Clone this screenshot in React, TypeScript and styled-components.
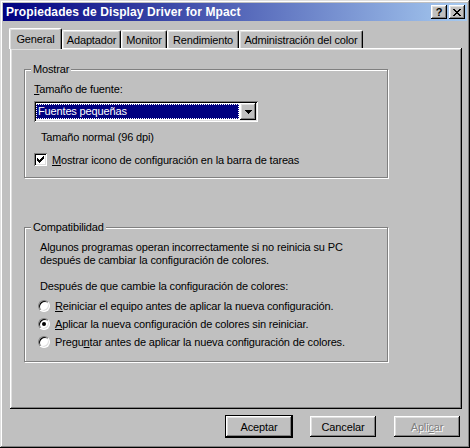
import React from 'react';
import styled, { createGlobalStyle, css } from 'styled-components';

const GlobalStyle = createGlobalStyle`
  html, body {
    margin: 0;
    padding: 0;
    background: #c0c0c0;
  }
  body {
    font-family: "Liberation Sans", Arial, sans-serif;
    font-size: 11px;
    letter-spacing: -0.15px;
    color: #000;
  }
`;

const raised = css`
  box-shadow: inset -1px -1px #000, inset 1px 1px #fff, inset -2px -2px #808080, inset 2px 2px #dfdfdf;
`;

const Window = styled.div`
  width: 470px;
  height: 448px;
  box-sizing: border-box;
  padding: 3px;
  background: #c0c0c0;
  display: flex;
  flex-direction: column;
  box-shadow: inset -1px -1px #000, inset 1px 1px #dfdfdf, inset -2px -2px #808080, inset 2px 2px #fff;
`;

const TitleBar = styled.div`
  height: 18px;
  display: flex;
  align-items: center;
  justify-content: space-between;
  padding: 0 2px 0 3px;
  background: linear-gradient(90deg, #000080 0%, #a6caf0 100%);
`;

const TitleText = styled.span`
  color: #fff;
  font-weight: bold;
  font-size: 12px;
  letter-spacing: 0.1px;
  white-space: nowrap;
`;

const TitleButtons = styled.div`
  display: flex;
  gap: 2px;
`;

const TitleButton = styled.div`
  width: 16px;
  height: 14px;
  box-sizing: border-box;
  background: #c0c0c0;
  display: flex;
  align-items: center;
  justify-content: center;
  font-weight: bold;
  font-size: 11px;
  line-height: 1;
  ${raised}
`;

const Body = styled.div`
  flex: 1;
  display: flex;
  flex-direction: column;
  padding: 7px 5px 0 6px;
`;

const TabRow = styled.div`
  display: flex;
  align-items: flex-end;
  height: 20px;
  position: relative;
  z-index: 1;
`;

const Tab = styled.div<{ $w: number; $active?: boolean }>`
  width: ${p => p.$w}px;
  height: ${p => (p.$active ? 21 : 18)}px;
  margin-bottom: ${p => (p.$active ? -1 : 0)}px;
  box-sizing: border-box;
  background: #c0c0c0;
  display: flex;
  align-items: ${p => (p.$active ? 'flex-start' : 'center')};
  justify-content: center;
  padding-top: ${p => (p.$active ? 4 : 1)}px;
  border-top-left-radius: 2px;
  border-top-right-radius: 2px;
  border-top: 1px solid #fff;
  border-left: 1px solid #fff;
  border-right: 1px solid #000;
  box-shadow: inset -1px 0 #808080, inset 1px 1px #dfdfdf;
  white-space: nowrap;
`;

const Panel = styled.div`
  width: 452px;
  height: 361px;
  margin-left: 1px;
  box-sizing: border-box;
  padding: 15px 0 0 14px;
  display: flex;
  flex-direction: column;
  box-shadow: inset -1px -1px #000, inset 1px 1px #fff, inset -2px -2px #808080, inset 2px 2px #dfdfdf;
`;

const Group = styled.fieldset<{ $mt?: number; $pt: number; $pb: number }>`
  width: 364px;
  box-sizing: border-box;
  margin: ${p => p.$mt ?? 0}px 0 0 0;
  padding: ${p => p.$pt}px 9px ${p => p.$pb}px 9px;
  border: 1px solid #808080;
  box-shadow: inset 1px 1px #fff, 1px 1px #fff;
  min-width: 0;
`;

const Legend = styled.legend`
  padding: 0 2px;
  margin-left: -3px;
  line-height: 13px;
  background: #c0c0c0;
  position: relative;
`;

const Line = styled.div<{ $ml?: number; $mt?: number }>`
  line-height: 13px;
  margin-left: ${p => p.$ml ?? 0}px;
  margin-top: ${p => p.$mt ?? 0}px;
  white-space: nowrap;
`;

const Combo = styled.div`
  width: 224px;
  height: 21px;
  margin-top: 5px;
  box-sizing: border-box;
  padding: 2px;
  background: #fff;
  display: flex;
  gap: 1px;
  box-shadow: inset 1px 1px #808080, inset -1px -1px #fff, inset 2px 2px #000, inset -2px -2px #dfdfdf;
`;

const ComboValue = styled.div`
  flex: 1;
  box-sizing: border-box;
  margin: 1px 0;
  background: #000080;
  color: #fff;
  border: 1px dotted #fff;
  line-height: 13px;
  padding-left: 1px;
`;

const ComboButton = styled.div`
  width: 16px;
  height: 17px;
  box-sizing: border-box;
  background: #c0c0c0;
  display: flex;
  align-items: center;
  justify-content: center;
  ${raised}
`;

const CheckRow = styled.label<{ $ml?: number; $mt?: number }>`
  display: flex;
  align-items: center;
  gap: 5px;
  height: 13px;
  margin-left: ${p => p.$ml ?? 0}px;
  margin-top: ${p => p.$mt ?? 0}px;
  white-space: nowrap;
`;

const CheckBox = styled.span`
  width: 13px;
  height: 13px;
  box-sizing: border-box;
  background: #fff;
  display: flex;
  align-items: center;
  justify-content: center;
  box-shadow: inset 1px 1px #808080, inset -1px -1px #fff, inset 2px 2px #000, inset -2px -2px #dfdfdf;
`;

const RadioList = styled.div`
  display: flex;
  flex-direction: column;
  margin-top: 4px;
  margin-left: 4px;
`;

const RadioRow = styled.label`
  display: flex;
  align-items: center;
  gap: 5px;
  height: 18px;
  white-space: nowrap;
`;

const RadioCircle = styled.span<{ $on?: boolean }>`
  width: 12px;
  height: 12px;
  box-sizing: border-box;
  border-radius: 50%;
  background: #fff;
  border-top: 1px solid #808080;
  border-left: 1px solid #808080;
  border-right: 1px solid #fff;
  border-bottom: 1px solid #fff;
  box-shadow: inset 1px 1px #000, inset -1px -1px #dfdfdf;
  display: flex;
  align-items: center;
  justify-content: center;
  &::after {
    content: '';
    width: 4px;
    height: 4px;
    border-radius: 50%;
    background: ${p => (p.$on ? '#000' : 'transparent')};
  }
`;

const ButtonRow = styled.div`
  display: flex;
  justify-content: flex-end;
  gap: 18px;
  margin-top: 7px;
  padding-right: 2px;
`;

const Button = styled.div<{ $default?: boolean; $disabled?: boolean }>`
  width: 66px;
  height: 21px;
  box-sizing: border-box;
  display: flex;
  align-items: center;
  justify-content: center;
  background: #c0c0c0;
  color: ${p => (p.$disabled ? '#808080' : '#000')};
  text-shadow: ${p => (p.$disabled ? '1px 1px #fff' : 'none')};
  ${raised}
  ${p =>
    p.$default &&
    css`
      box-shadow: 0 0 0 1px #000, inset -1px -1px #000, inset 1px 1px #fff, inset -2px -2px #808080, inset 2px 2px #dfdfdf;
    `}
`;

const U = styled.span`
  text-decoration: underline;
  text-underline-offset: 1px;
`;

const DownArrow = () => (
  <svg width="7" height="4" viewBox="0 0 7 4">
    <path d="M0 0h7v1H6v1H5v1H4v1H3V3H2V2H1V1H0z" fill="#000" />
  </svg>
);

const CloseGlyph = () => (
  <svg width="8" height="7" viewBox="0 0 8 7">
    <path d="M0 0h2v1h1v1h2V1h1V0h2v1H7v1H6v1H5v1h1v1h1v1h1v1H6V6H5V5H3v1H2v1H0V6h1V5h1V4h1V3H2V2H1V1H0z" fill="#000" />
  </svg>
);

const CheckMark = () => (
  <svg width="7" height="7" viewBox="0 0 7 7">
    <path d="M6 0h1v3H6v1H5v1H4v1H3v1H2V6H1V5H0V2h1v1h1v1h1V3h1V2h1V1h1z" fill="#000" />
  </svg>
);

export default function App() {
  return (
    <>
      <GlobalStyle />
      <Window>
        <TitleBar>
          <TitleText>Propiedades de Display Driver for Mpact</TitleText>
          <TitleButtons>
            <TitleButton>?</TitleButton>
            <TitleButton>
              <CloseGlyph />
            </TitleButton>
          </TitleButtons>
        </TitleBar>
        <Body>
          <TabRow>
            <Tab $w={53} $active>General</Tab>
            <Tab $w={59}>Adaptador</Tab>
            <Tab $w={46}>Monitor</Tab>
            <Tab $w={72}>Rendimiento</Tab>
            <Tab $w={124}>Administración del color</Tab>
          </TabRow>
          <Panel>
            <Group $pt={7} $pb={11}>
              <Legend>Mostrar</Legend>
              <Line>
                <U>T</U>amaño de fuente:
              </Line>
              <Combo>
                <ComboValue>Fuentes pequeñas</ComboValue>
                <ComboButton>
                  <DownArrow />
                </ComboButton>
              </Combo>
              <Line $ml={7} $mt={9}>
                Tamaño normal (96 dpi)
              </Line>
              <CheckRow $mt={9}>
                <CheckBox>
                  <CheckMark />
                </CheckBox>
                <span>
                  <U>M</U>ostrar icono de configuración en la barra de tareas
                </span>
              </CheckRow>
            </Group>
            <Group $mt={43} $pt={7} $pb={10}>
              <Legend>Compatibilidad</Legend>
              <Line $ml={6}>Algunos programas operan incorrectamente si no reinicia su PC</Line>
              <Line $ml={6}>después de cambiar la configuración de colores.</Line>
              <Line $ml={6} $mt={13}>
                Después de que cambie la configuración de colores:
              </Line>
              <RadioList>
                <RadioRow>
                  <RadioCircle />
                  <span>
                    <U>R</U>einiciar el equipo antes de aplicar la nueva configuración.
                  </span>
                </RadioRow>
                <RadioRow>
                  <RadioCircle $on />
                  <span>
                    <U>A</U>plicar la nueva configuración de colores sin reiniciar.
                  </span>
                </RadioRow>
                <RadioRow>
                  <RadioCircle />
                  <span>
                    Pregu<U>n</U>tar antes de aplicar la nueva configuración de colores.
                  </span>
                </RadioRow>
              </RadioList>
            </Group>
          </Panel>
          <ButtonRow>
            <Button $default>Aceptar</Button>
            <Button>Cancelar</Button>
            <Button $disabled>
              Apli<U>c</U>ar
            </Button>
          </ButtonRow>
        </Body>
      </Window>
    </>
  );
}
